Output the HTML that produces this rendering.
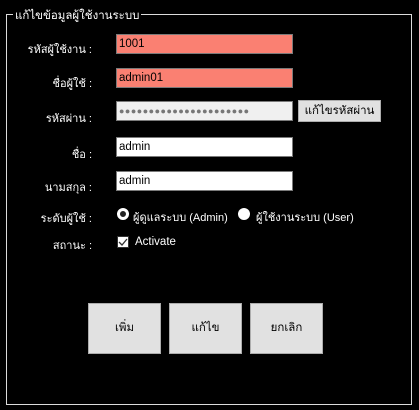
<!DOCTYPE html>
<html><head><meta charset="utf-8"><style>
body{margin:0;width:419px;height:410px;background:#000;position:relative;overflow:hidden;font-family:"Liberation Sans","DejaVu Sans",sans-serif;font-size:11px;color:#fff}
.a{position:absolute}
.box{left:6px;top:14px;width:404px;height:389px;border:1px solid #dcdcdc}
.title{left:13px;top:7px;background:#000;padding:0 2px;font-size:11.5px}
.lbl{right:327px;text-align:right;white-space:nowrap}
.in{left:116px;width:173px;height:18px;border:1px solid #7a7a7a;background:#fff;color:#000;font-size:11.5px;line-height:18px;padding-left:2px;box-sizing:content-box}
.pink{background:#fa8072}
.btn{background:#e1e1e1;border:1px solid #adadad;color:#000;text-align:center;box-sizing:border-box;font-size:11.5px}
.radio{width:12px;height:12px;border-radius:50%;background:#fff;box-sizing:border-box}
</style></head><body>
<div class="a box"></div>
<div class="a title">แก้ไขข้อมูลผู้ใช้งานระบบ</div>

<div class="a lbl" style="top:40px">รหัสผู้ใช้งาน :</div>
<div class="a in pink" style="top:34px">1001</div>

<div class="a lbl" style="top:74px">ชื่อผู้ใช้ :</div>
<div class="a in pink" style="top:68px">admin01</div>

<div class="a lbl" style="top:109px">รหัสผ่าน :</div>
<div class="a in" style="top:101px;background:#f0f0f0;color:#777;font-size:9px;letter-spacing:0.5px;overflow:hidden;white-space:nowrap">●●●●●●●●●●●●●●●●●●●●●●</div>
<div class="a btn" style="left:298px;top:100px;width:83px;height:22px;line-height:20px">แก้ไขรหัสผ่าน</div>

<div class="a lbl" style="top:145px">ชื่อ :</div>
<div class="a in" style="top:137px">admin</div>

<div class="a lbl" style="top:178px">นามสกุล :</div>
<div class="a in" style="top:171px">admin</div>

<div class="a lbl" style="top:209px">ระดับผู้ใช้ :</div>
<div class="a radio" style="left:117px;top:208px;border:3px solid #fff;background:#222"></div>
<div class="a" style="left:133px;top:208px">ผู้ดูแลระบบ (Admin)</div>
<div class="a radio" style="left:238px;top:208px"></div>
<div class="a" style="left:256px;top:208px">ผู้ใช้งานระบบ (User)</div>

<div class="a lbl" style="top:236px">สถานะ :</div>
<div class="a" style="left:117px;top:236px;width:12px;height:12px;background:#fff;border:1px solid #333;box-sizing:border-box">
<svg width="12" height="12" style="position:absolute;left:-1px;top:-1px"><path d="M2 6 L5 9 L10 3" stroke="#333" stroke-width="1.3" fill="none"/></svg></div>
<div class="a" style="left:135px;top:236px;font-size:11.5px">Activate</div>

<div class="a btn" style="left:88px;top:303px;width:73px;height:51px;line-height:49px">เพิ่ม</div>
<div class="a btn" style="left:169px;top:303px;width:73px;height:51px;line-height:49px">แก้ไข</div>
<div class="a btn" style="left:250px;top:303px;width:73px;height:51px;line-height:49px">ยกเลิก</div>
</body></html>
